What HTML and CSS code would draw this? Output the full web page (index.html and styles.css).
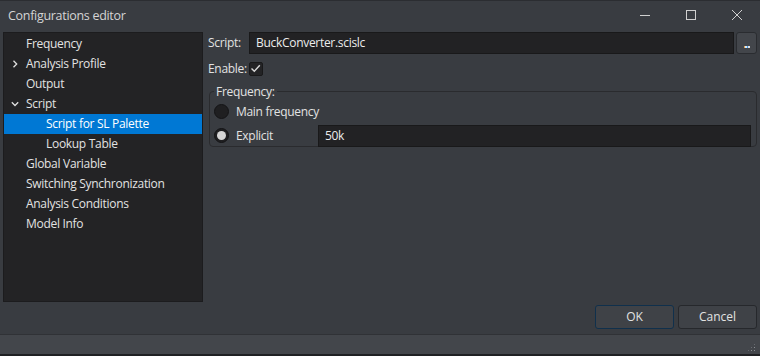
FILE: index.html
```html
<!DOCTYPE html>
<html lang="en">
<head>
  <meta charset="UTF-8" />
  <title>Configurations editor</title>
  <link rel="stylesheet" href="styles.css">
</head>
<body>
  <div class="window">
    <div class="titlebar">
      <div class="title">Configurations editor</div>
      <div class="win-buttons">
        <span class="wbtn">
          <svg width="12" height="12" viewBox="0 0 12 12"><path d="M1 6.5h10" stroke="#d0d0d0" stroke-width="1"/></svg>
        </span>
        <span class="wbtn">
          <svg width="12" height="12" viewBox="0 0 12 12"><rect x="1.5" y="1.5" width="9" height="9" fill="none" stroke="#d0d0d0" stroke-width="1"/></svg>
        </span>
        <span class="wbtn">
          <svg width="12" height="12" viewBox="0 0 12 12"><path d="M1 1l10 10M11 1L1 11" stroke="#d0d0d0" stroke-width="1"/></svg>
        </span>
      </div>
    </div>

    <div class="content">
      <div class="tree">
        <div class="row"><span class="arrow"></span>Frequency</div>
        <div class="row"><span class="arrow">
          <svg width="8" height="8" viewBox="0 0 8 8"><path d="M2.5 0.8l3.2 3.2-3.2 3.2" fill="none" stroke="#e0e0e0" stroke-width="1.3"/></svg>
        </span>Analysis Profile</div>
        <div class="row"><span class="arrow"></span>Output</div>
        <div class="row"><span class="arrow">
          <svg width="8" height="8" viewBox="0 0 8 8"><path d="M0.8 2.3l3.2 3.2 3.2-3.2" fill="none" stroke="#e0e0e0" stroke-width="1.3"/></svg>
        </span>Script</div>
        <div class="row child selected">Script for SL Palette</div>
        <div class="row child">Lookup Table</div>
        <div class="row"><span class="arrow"></span>Global Variable</div>
        <div class="row"><span class="arrow"></span>Switching Synchronization</div>
        <div class="row"><span class="arrow"></span>Analysis Conditions</div>
        <div class="row"><span class="arrow"></span>Model Info</div>
      </div>

      <div class="form">
        <div class="field-line">
          <span class="label">Script:</span>
          <div class="input wide">BuckConverter.scislc</div>
          <button class="browse"><span class="dots"></span></button>
        </div>
        <div class="field-line enable">
          <span class="label">Enable:</span>
          <span class="checkbox">
            <svg width="11" height="11" viewBox="0 0 11 11"><path d="M1.5 5.5l2.8 2.8 5.5-6" fill="none" stroke="#d8d8d8" stroke-width="1.4"/></svg>
          </span>
        </div>
        <fieldset class="group">
          <legend>Frequency:</legend>
          <div class="radio-line">
            <span class="radio"></span>
            <span class="rlabel">Main frequency</span>
          </div>
          <div class="radio-line">
            <span class="radio checked"></span>
            <span class="rlabel short">Explicit</span>
            <div class="input grow">50k</div>
          </div>
        </fieldset>
      </div>
    </div>

    <div class="actions">
      <button class="btn default">OK</button>
      <button class="btn">Cancel</button>
    </div>

    <div class="statusbar">
      <span class="grip"></span>
    </div>
  </div>
</body>
</html>
```

FILE: styles.css
```css
:root {
  --bg: #393c41;
  --panel: #232325;
  --border: #1c1c1e;
  --text: #e2e2e2;
  --select: #0078d4;
}

* {
  box-sizing: border-box;
}

body {
  margin: 0;
  background: var(--bg);
  font-family: "Open Sans", "Noto Sans", sans-serif;
  font-size: 12px;
  letter-spacing: -0.3px;
  color: var(--text);
}

.window {
  width: 760px;
  height: 356px;
  display: flex;
  flex-direction: column;
  border-top: 1px solid #2b2d31;
  border-bottom: 2px solid #1f2023;
}

.titlebar {
  height: 31px;
  display: flex;
  align-items: center;
  justify-content: space-between;
  padding-left: 8px;
}

.title {
  color: #d4d4d4;
  font-size: 12.5px;
  margin-top: -2px;
}

.win-buttons {
  display: flex;
  height: 100%;
}

.wbtn {
  width: 46px;
  display: flex;
  align-items: center;
  justify-content: center;
  margin-top: -2px;
}

.content {
  display: flex;
  padding: 0 3px 0 3px;
  gap: 5px;
  height: 270px;
}

.tree {
  width: 200px;
  height: 270px;
  background: var(--panel);
  border: 1px solid var(--border);
  padding-top: 1px;
}

.row {
  height: 20px;
  line-height: 20px;
  display: flex;
  align-items: center;
  white-space: nowrap;
}

.arrow {
  width: 22px;
  display: flex;
  align-items: center;
  justify-content: flex-start;
  padding-left: 7px;
}

.row.child {
  padding-left: 42px;
}

.row.selected {
  background: var(--select);
  color: #ffffff;
}

.form {
  flex: 1;
  display: flex;
  flex-direction: column;
}

.field-line {
  display: flex;
  align-items: center;
  height: 22px;
}

.label {
  width: 41px;
}

.input {
  height: 22px;
  background: #222224;
  border: 1px solid #19191a;
  padding-left: 6px;
  line-height: 20px;
  color: #ececec;
}

.input.wide {
  flex: 1;
}

.browse {
  width: 21px;
  height: 22px;
  margin-left: 2px;
  background: #43464b;
  border: 1px solid #2a2c30;
  border-radius: 3px;
  padding: 0;
  display: flex;
  align-items: flex-end;
  justify-content: center;
  padding-bottom: 5px;
}

.dots {
  width: 6px;
  height: 2px;
  background: linear-gradient(90deg, #e8a44c 0 1px, #d0e8ff 1px 3px, #4aa0e8 3px 4px, #e0e0e0 4px 6px);
}

.enable {
  margin-top: 7px;
  height: 16px;
}

.enable .label {
  width: auto;
  margin-right: 2px;
}

.checkbox {
  width: 14px;
  height: 14px;
  background: #232325;
  border: 1px solid #19191a;
  border-radius: 2px;
  display: flex;
  align-items: center;
  justify-content: center;
}

.group {
  margin: 9px 0 0 1px;
  border: 1px solid #2a2b2e;
  border-radius: 4px;
  padding: 3px 5px 5px 5px;
  height: 61px;
}

.group legend {
  padding: 0 2px;
  margin-left: -1px;
  line-height: 12px;
}

.radio-line {
  display: flex;
  align-items: center;
  height: 22px;
  margin-bottom: 2px;
}

.radio {
  width: 15px;
  height: 15px;
  margin-left: -1px;
  border-radius: 50%;
  background: #1f1f21;
  border: 1px solid #141416;
  margin-right: 7px;
  display: flex;
  align-items: center;
  justify-content: center;
}

.radio.checked::after {
  content: "";
  width: 9px;
  height: 9px;
  border-radius: 50%;
  background: #d6d6d6;
}

.rlabel.short {
  width: 82px;
}

.input.grow {
  flex: 1;
}

.actions {
  height: 33px;
  display: flex;
  justify-content: flex-end;
  align-items: flex-start;
  gap: 4px;
  padding: 3px 3px 0 0;
}

.btn {
  width: 79px;
  height: 24px;
  background: #3f4247;
  border: 1px solid #26282c;
  border-radius: 3px;
  color: var(--text);
  font-family: inherit;
  font-size: 12px;
  padding: 0;
}

.btn.default {
  border-color: #10304c;
}

.statusbar {
  height: 20px;
  background: #43464b;
  border-top: 1px solid #303236;
  position: relative;
}

.grip {
  position: absolute;
  right: 4px;
  bottom: 2px;
  width: 9px;
  height: 9px;
  background:
    radial-gradient(circle, #8a8d92 0.8px, transparent 1px) 0 0 / 3px 3px;
  clip-path: polygon(100% 0, 100% 100%, 0 100%);
}
```
